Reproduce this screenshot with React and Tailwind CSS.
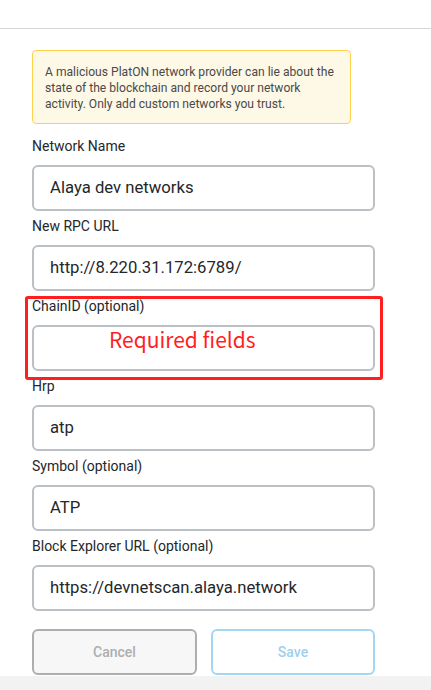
const fields = [
  { label: "Network Name", value: "Alaya dev networks" },
  { label: "New RPC URL", value: "http://8.220.31.172:6789/" },
  { label: "ChainID (optional)", value: "", flagged: true },
  { label: "Hrp", value: "atp" },
  { label: "Symbol (optional)", value: "ATP" },
  { label: "Block Explorer URL (optional)", value: "https://devnetscan.alaya.network" },
]

function Field({ label, value, flagged }) {
  return (
    <div className="relative pt-[5px]">
      {/* annotation outline */}
      {flagged && (
        <div className="absolute top-[5px] -left-[7px] -right-[8px] -bottom-[9px] border-[3px] border-[#ff1f1f] rounded-[3px] pointer-events-none" />
      )}
      <div className="text-[14px] leading-5 text-[#24272a]">{label}</div>
      <div className="relative mt-[9px] h-[46px] border-2 border-[#bbc0c5] rounded-md bg-white flex items-center pl-4">
        <span className="text-[16.7px] text-[#24272a]">{value}</span>
        {flagged && (
          <span
            className="absolute left-[75px] -top-[3px] text-[21px] leading-[30px] text-[#ff1f1f]"
            style={{ fontFamily: '"Noto Sans CJK SC", sans-serif' }}
          >
            Required fields
          </span>
        )}
      </div>
    </div>
  )
}

export default function App() {
  return (
    <div className="w-[431px] h-[690px] bg-white flex flex-col overflow-hidden" style={{ fontFamily: "Roboto, sans-serif" }}>
      <div className="h-[29px] border-b border-[#d6d6d6] shrink-0" />

      <div className="pl-8 w-[375px] flex-1">
        {/* Warning */}
        <div className="mt-[21px] w-[319px] border border-[#ffd24d] bg-[#fef8e6] rounded-[4px] px-3 pt-[13px] pb-[11px] text-[12.1px] leading-4 text-[#4a4a4a]">
          A malicious PlatON network provider can lie about the state of the blockchain and record your network activity. Only add custom networks you trust.
        </div>

        <div className="mt-[7px] flex flex-col">
          {fields.map((f) => (
            <Field key={f.label} {...f} />
          ))}
        </div>

        <div className="mt-[18px] flex gap-[14px]">
          <button className="w-[165px] h-[46px] rounded-md border-2 border-[#aeaeae] bg-[#f7f7f7] text-[14px] font-medium text-[#aeaeae]">
            Cancel
          </button>
          <button className="w-[164px] h-[46px] rounded-md border-2 border-[#a3d6f0] bg-white text-[14px] font-medium text-[#9dd0ee]">
            Save
          </button>
        </div>
      </div>

      <div className="h-[14px] bg-[#f2f2f2] shrink-0" />
    </div>
  )
}
